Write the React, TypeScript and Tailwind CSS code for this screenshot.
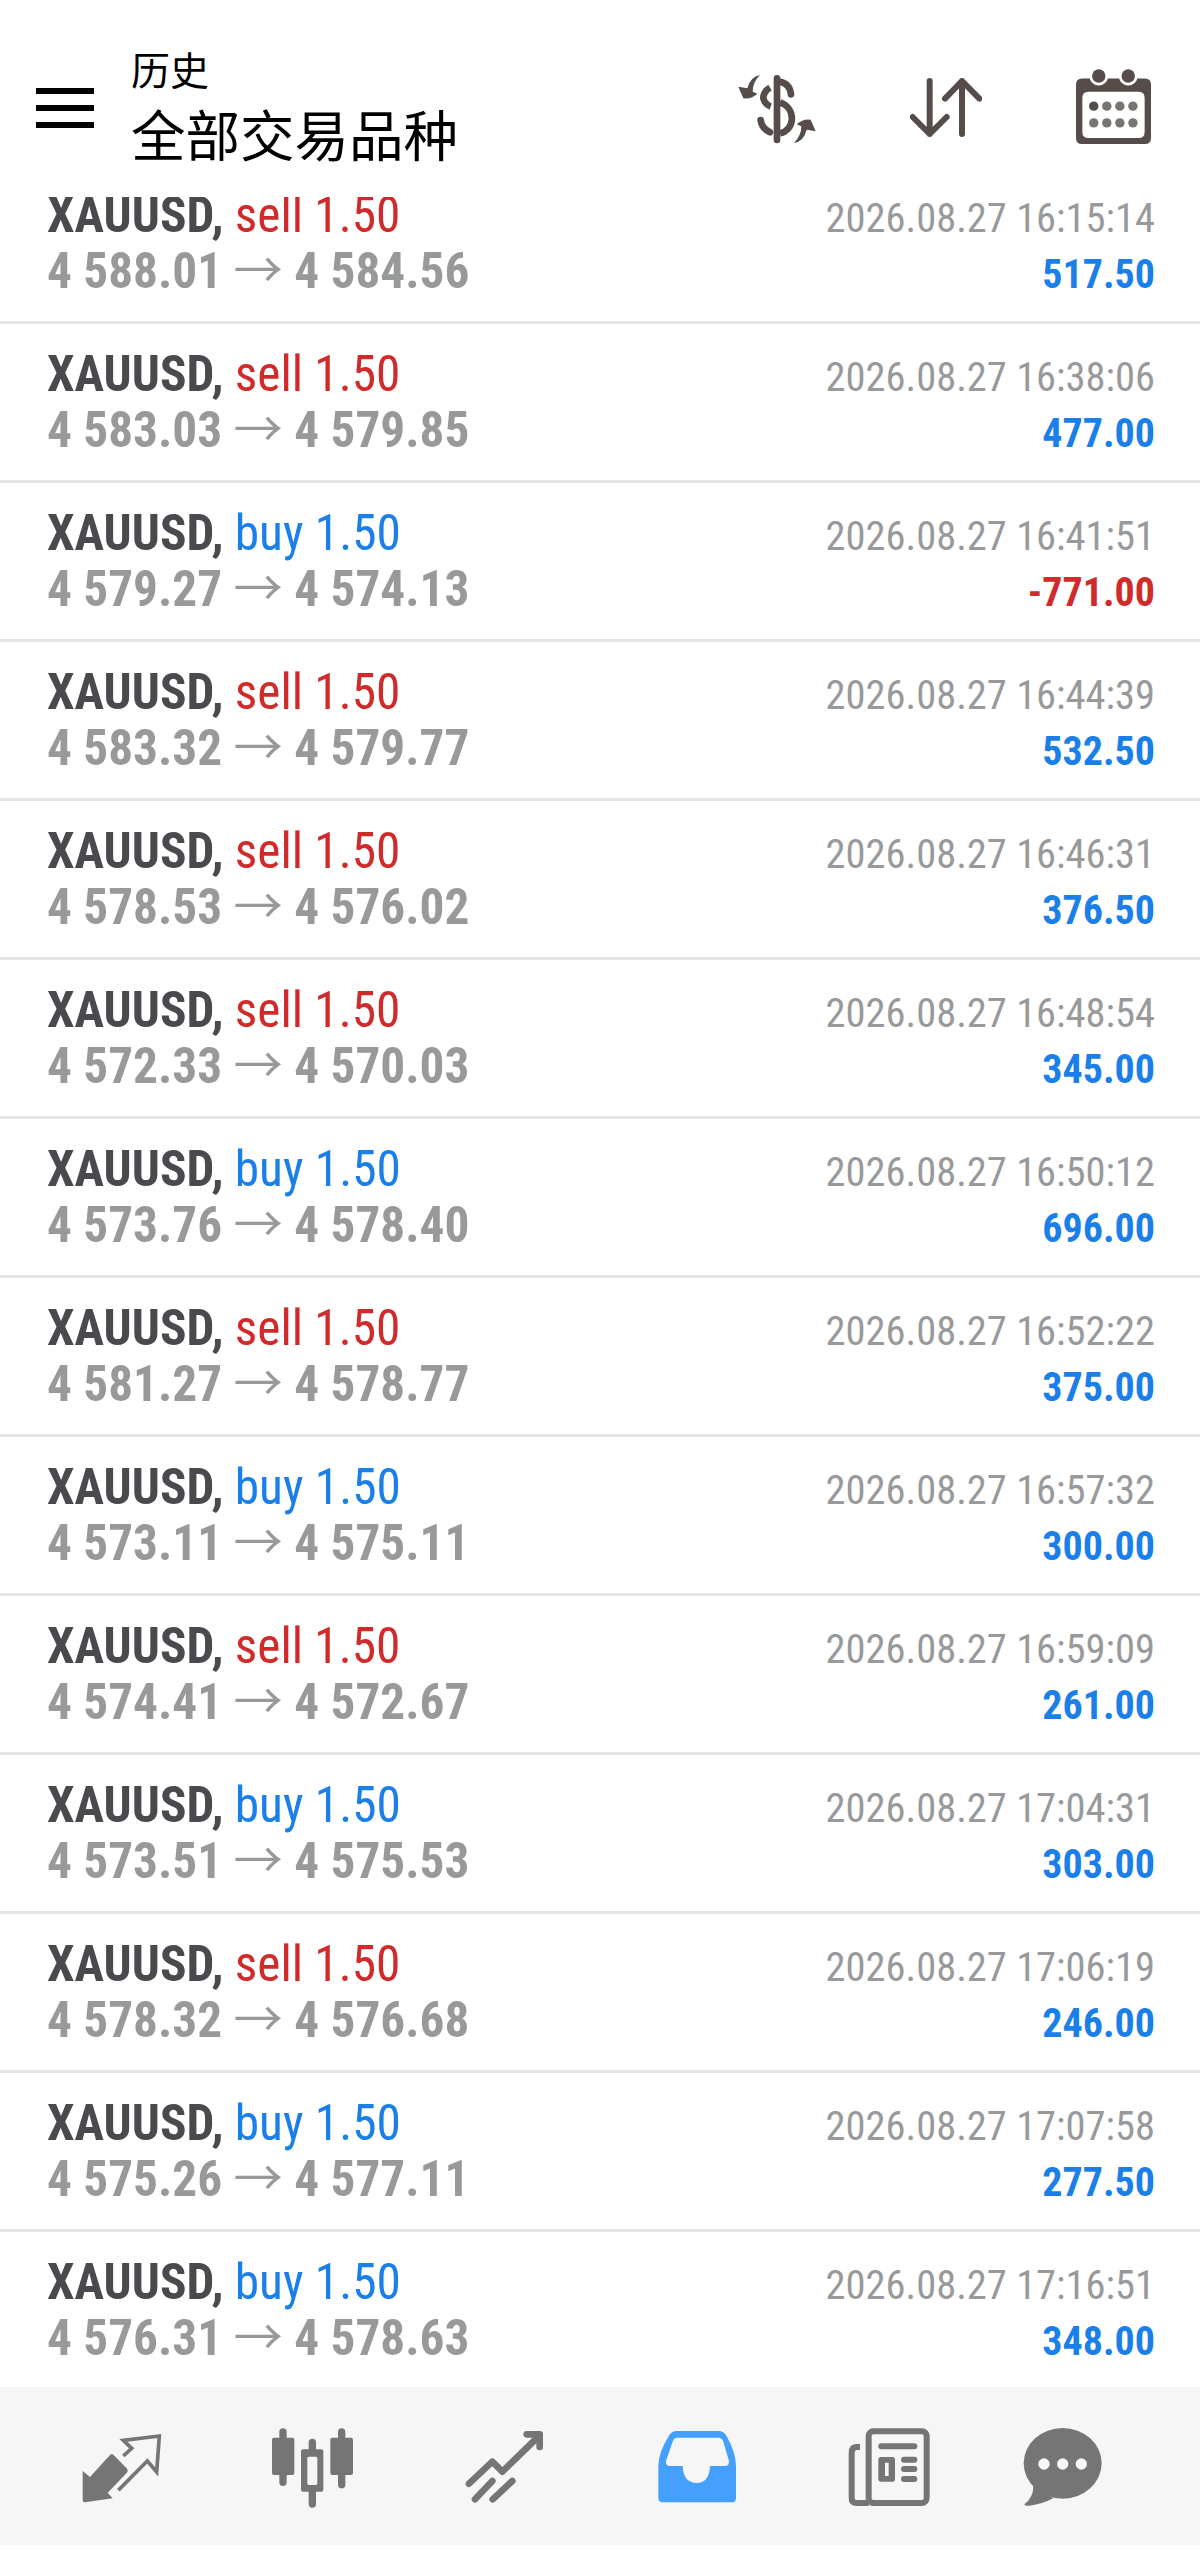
const rows: [string, string, string, string, string][] = [
  ["sell", "4 588.01", "4 584.56", "2026.08.27 16:15:14", "517.50"],
  ["sell", "4 583.03", "4 579.85", "2026.08.27 16:38:06", "477.00"],
  ["buy", "4 579.27", "4 574.13", "2026.08.27 16:41:51", "-771.00"],
  ["sell", "4 583.32", "4 579.77", "2026.08.27 16:44:39", "532.50"],
  ["sell", "4 578.53", "4 576.02", "2026.08.27 16:46:31", "376.50"],
  ["sell", "4 572.33", "4 570.03", "2026.08.27 16:48:54", "345.00"],
  ["buy", "4 573.76", "4 578.40", "2026.08.27 16:50:12", "696.00"],
  ["sell", "4 581.27", "4 578.77", "2026.08.27 16:52:22", "375.00"],
  ["buy", "4 573.11", "4 575.11", "2026.08.27 16:57:32", "300.00"],
  ["sell", "4 574.41", "4 572.67", "2026.08.27 16:59:09", "261.00"],
  ["buy", "4 573.51", "4 575.53", "2026.08.27 17:04:31", "303.00"],
  ["sell", "4 578.32", "4 576.68", "2026.08.27 17:06:19", "246.00"],
  ["buy", "4 575.26", "4 577.11", "2026.08.27 17:07:58", "277.50"],
  ["buy", "4 576.31", "4 578.63", "2026.08.27 17:16:51", "348.00"],
];

function Row({ d, first }: { d: [string, string, string, string, string]; first: boolean }) {
  const [side, open, close, date, profit] = d;
  const neg = profit.startsWith("-");
  return (
    <div className={`flex justify-between h-[159px] shrink-0 border-b-[3px] border-[#e5e5e5] pl-[47px] pr-[45px] whitespace-nowrap ${first ? "-mt-[32px]" : ""}`}>
      <div className="pt-[22px] [font-stretch:75%]">
        <div className="h-[56px] text-[49.3px] leading-[56px]">
          <span className="font-bold text-[#49494e]">XAUUSD,</span>{" "}
          <span className={side === "buy" ? "text-[#1a7fe8]" : "text-[#d02a2a]"}>{side} 1.50</span>
        </div>
        <div className="h-[56px] text-[49.3px] leading-[56px] font-bold text-[#98999b]">
          {open} <span className="font-normal">→</span> {close}
        </div>
      </div>
      <div className="pt-[26px] text-right [font-stretch:75%]">
        <div className="h-[56px] text-[40.5px] leading-[55px] text-[#98999b]">{date}</div>
        <div className={`h-[55px] text-[40px] leading-[55px] font-bold ${neg ? "text-[#d02a2a]" : "text-[#1a7fe8]"}`}>{profit}</div>
      </div>
    </div>
  );
}

function DollarIcon() {
  return (
    <svg viewBox="0 0 300 255" className="w-[100px] h-[85px]" fill="none" stroke="#564d4b">
      <path d="M141 40V225" strokeWidth="20" strokeLinecap="round" />
      <path d="M150 50Q180 56 183 88" strokeWidth="20" strokeLinecap="round" />
      <path d="M120 68Q100 80 100 100Q104 118 122 125" strokeWidth="20" />
      <path d="M150 112C200 130 195 195 150 205" strokeWidth="20" />
      <path d="M92 165Q95 190 120 202" strokeWidth="20" strokeLinecap="round" />
      <path d="M90 30Q60 36 52 70L25 65L40 100Q62 104 82 86L68 80Q68 52 90 30Z" fill="#564d4b" stroke="none" />
      <path d="M90 30Q60 36 52 70L25 65L40 100Q62 104 82 86L68 80Q68 52 90 30Z" fill="#564d4b" stroke="none" transform="rotate(180 141 132)" />
    </svg>
  );
}

function ArrowsIcon() {
  return (
    <svg viewBox="0 0 216 180" className="w-[72px] h-[60px]" fill="none" stroke="#564d4b" strokeWidth="18" strokeLinecap="round" strokeLinejoin="round">
      <path d="M59 9V168M8 117L59 168L110 117" />
      <path d="M156 168V9M105 62L156 9L208 62" />
    </svg>
  );
}

function CalendarIcon() {
  const xs = [53, 92, 131, 170];
  return (
    <svg viewBox="0 0 224 224" className="w-[75px] h-[75px]">
      <path fillRule="evenodd" fill="#564d4b" d="M18 28H206Q224 28 224 46V206Q224 224 206 224H18Q0 224 0 206V46Q0 28 18 28ZM37 68Q19 68 19 86V188Q19 206 37 206H187Q205 206 205 188V86Q205 68 187 68Z" />
      <circle cx="68" cy="21" r="28" fill="#fff" />
      <circle cx="156" cy="21" r="28" fill="#fff" />
      <circle cx="68" cy="21" r="20" fill="#564d4b" />
      <circle cx="156" cy="21" r="20" fill="#564d4b" />
      {[111, 161].map((y) => xs.map((x, i) => <circle key={`${x}-${y}`} cx={x} cy={y} r="14" fill={i === 0 && y === 111 ? "#564d4b" : "#7a7370"} />))}
    </svg>
  );
}

const NAV = "#757575";
const BG = "#f6f6f6";

function NavTrade() {
  return (
    <svg viewBox="0 0 360 330" className="w-[120px] h-[110px]">
      <path d="M68 180L90 198L148 134Q155 126 163 134L200 172Q206 180 200 186L143 245L158 262L75 274Q68 274 68 266Z" fill={NAV} />
      <path d="M190 135L215 112L190 88L298 75L290 183L262 150L175 238" fill="none" stroke={NAV} strokeWidth="11" />
    </svg>
  );
}
function NavCandles() {
  return (
    <svg viewBox="0 0 360 330" className="w-[120px] h-[110px]" fill={NAV}>
      <rect x="88" y="52" width="22" height="173" rx="11" />
      <rect x="66" y="80" width="67" height="112" rx="6" />
      <rect x="176" y="83" width="22" height="207" rx="11" />
      <rect x="153" y="115" width="67" height="127" rx="6" />
      <rect x="172" y="137" width="30" height="85" rx="5" fill={BG} />
      <rect x="264" y="52" width="22" height="180" rx="11" />
      <rect x="241" y="80" width="68" height="112" rx="6" />
    </svg>
  );
}
function NavTrend() {
  return (
    <svg viewBox="0 0 360 330" className="w-[120px] h-[110px]" fill="none" stroke={NAV} strokeWidth="20" strokeLinecap="round" strokeLinejoin="round">
      <path d="M72 218L142 152L172 182L282 75" />
      <path d="M245 70H284V108" />
      <path d="M90 265L142 210" />
      <path d="M143 265L202 210" />
    </svg>
  );
}
function NavInbox() {
  return (
    <svg viewBox="0 0 360 330" className="w-[120px] h-[110px]">
      <path fillRule="evenodd" fill="#459ffc" d="M70 274Q55 274 55 260V165Q55 125 88 72Q96 60 110 60H235Q250 60 258 72Q288 125 288 165V260Q288 274 274 274ZM112 80Q102 80 98 92L78 150Q76 165 90 165H128Q130 215 170 216Q208 215 210 165H255Q268 165 267 150L250 92Q246 80 235 80Z" />
    </svg>
  );
}
function NavNews() {
  return (
    <svg viewBox="0 0 360 330" className="w-[120px] h-[110px]">
      <rect x="116" y="61" width="174" height="215" rx="14" fill="none" stroke={NAV} strokeWidth="18" />
      <path d="M90 108H80Q65 108 65 125V262Q65 276 80 276H116" fill="none" stroke={NAV} strokeWidth="18" />
      <g fill={NAV}>
        <rect x="145" y="97" width="117" height="18" rx="9" />
        <path fillRule="evenodd" d="M153 138H187Q195 138 195 146V204Q195 212 187 212H153Q145 212 145 204V146Q145 138 153 138ZM165 155V195H176V155Z" />
        <rect x="213" y="137" width="49" height="18" rx="9" />
        <rect x="213" y="165" width="49" height="18" rx="9" />
        <rect x="213" y="195" width="49" height="18" rx="9" />
      </g>
    </svg>
  );
}
function NavChat() {
  return (
    <svg viewBox="0 0 360 330" className="w-[120px] h-[110px]">
      <ellipse cx="173" cy="157" rx="117" ry="106" fill={NAV} />
      <path d="M85 225Q85 260 58 280Q60 286 75 284Q110 280 145 262Z" fill={NAV} />
      <circle cx="117" cy="159" r="17" fill={BG} />
      <circle cx="173" cy="159" r="17" fill={BG} />
      <circle cx="229" cy="159" r="17" fill={BG} />
    </svg>
  );
}

export default function App() {
  return (
    <div className="w-[1200px] h-[2550px] flex flex-col overflow-hidden bg-white font-['Roboto','Noto_Sans_CJK_SC',sans-serif]">
      <header className="h-[197px] shrink-0 relative z-10 bg-white flex items-start">
        <div className="ml-[36px] mt-[88px] w-[58px] flex flex-col gap-[11px]">
          <div className="h-[6px] bg-black" />
          <div className="h-[6px] bg-black" />
          <div className="h-[6px] bg-black" />
        </div>
        <div className="ml-[37px] mt-[42px] font-['Noto_Sans_CJK_SC',sans-serif] text-black">
          <div className="text-[39px] leading-[52px]">历史</div>
          <div className="text-[54.5px] leading-[78px]">全部交易品种</div>
        </div>
        <div className="ml-auto mt-[65px] flex items-start">
          <DollarIcon />
          <div className="ml-[80px] mt-[13px]"><ArrowsIcon /></div>
          <div className="ml-[94px] mt-[4px] mr-[49px]"><CalendarIcon /></div>
        </div>
      </header>
      <main className="flex-1 min-h-0 overflow-hidden flex flex-col">
        {rows.map((r, i) => <Row key={i} d={r} first={i === 0} />)}
      </main>
      <nav className="h-[158px] shrink-0 mb-[5px] bg-[#f6f6f6] flex items-center pl-[60px]">
        <NavTrade />
        <div className="ml-[70px]"><NavCandles /></div>
        <div className="ml-[75px]"><NavTrend /></div>
        <div className="ml-[75px]"><NavInbox /></div>
        <div className="ml-[70px]"><NavNews /></div>
        <div className="ml-[55px]"><NavChat /></div>
      </nav>
    </div>
  );
}
